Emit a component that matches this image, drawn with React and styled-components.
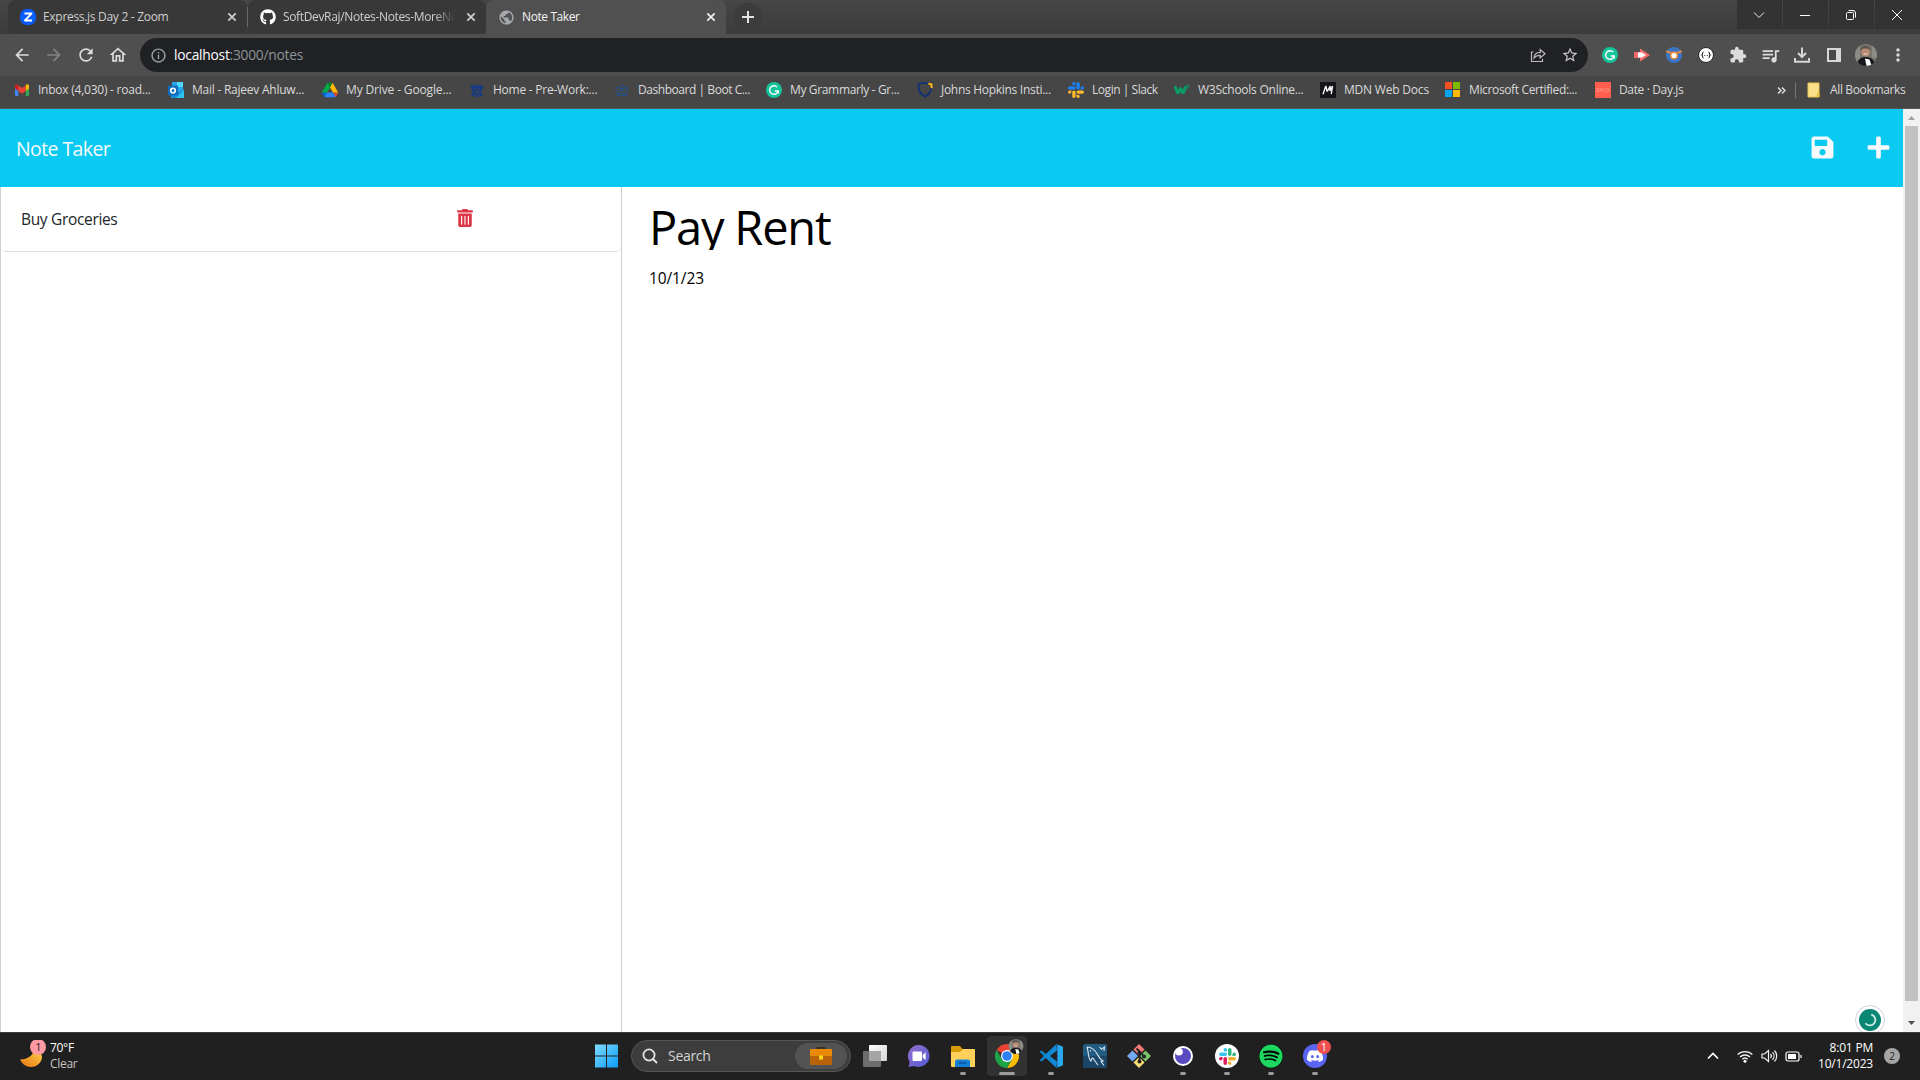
import React from "react";
import styled, { createGlobalStyle, css } from "styled-components";
import { FaGithub, FaSave, FaPlus, FaTrashAlt, FaSpotify } from "react-icons/fa";
import {
  MdArrowBack, MdArrowForward, MdRefresh, MdOutlineHome, MdInfoOutline, MdStarBorder,
  MdExtension, MdQueueMusic, MdMoreVert, MdPublic,
} from "react-icons/md";
import { SiDiscord } from "react-icons/si";

const Global = createGlobalStyle`
  *, *::before, *::after { box-sizing: border-box; }
  html, body { margin: 0; padding: 0; overflow: hidden; background: #fff; }
  body { font-family: "Open Sans", "Noto Sans", sans-serif; }
  svg { display: block; flex: none; }
`;

const Screen = styled.div`
  width: 1920px;
  height: 1080px;
  display: flex;
  flex-direction: column;
  overflow: hidden;
`;

const Text = styled.span`
  font-size: ${(p) => p.$size || 12}px;
  letter-spacing: ${(p) => p.$ls ?? -0.3}px;
  color: ${(p) => p.$color || "#dadada"};
  line-height: 16px;
  white-space: nowrap;
`;

const Cell = styled.span`
  width: ${(p) => p.$w}px;
  height: ${(p) => p.$h || 16}px;
  flex: none;
  display: flex;
  align-items: center;
  justify-content: center;
  color: ${(p) => p.$color || "#dcdcdc"};
  font-size: ${(p) => p.$size || 20}px;
`;

/* ---------- browser chrome ---------- */
const TabStrip = styled.div`
  height: 34px;
  flex: none;
  display: flex;
  padding-left: 8px;
  background: linear-gradient(#464646, #3b3b3b);
`;

const Tab = styled.div`
  width: ${(p) => p.$w}px;
  height: 34px;
  display: flex;
  align-items: center;
  padding: 0 7px 0 12px;
  background: ${(p) => (p.$active ? "#505050" : "#383838")};
  border-radius: ${(p) => (p.$active ? "8px 8px 0 0" : "8px")};
`;

const TabTitle = styled(Text)`
  flex: 1;
  margin-left: 7px;
  margin-right: 8px;
  overflow: hidden;
  color: ${(p) => (p.$active ? "#f4f4f4" : "#cfcfcf")};
  ${(p) => p.$fade && css`mask-image: linear-gradient(90deg, #000 88%, transparent);`}
`;

const TabDivider = styled.i`
  width: 1px;
  height: 20px;
  margin: 7px 0;
  background: #6a6a6a;
`;

const NewTab = styled.div`
  width: 28px;
  height: 28px;
  margin: 3px 0 0 8px;
  border-radius: 50%;
  background: #3c3c3c;
  display: grid;
  place-items: center;
`;

const WindowControls = styled.div`
  margin-left: auto;
  display: flex;
  gap: 1px;
  height: 29px;
`;

const WindowButton = styled.div`
  width: 45px;
  padding-right: 1px;
  background: #333333;
  display: grid;
  place-items: center;
`;

const Toolbar = styled.div`
  height: 42px;
  flex: none;
  display: flex;
  align-items: center;
  padding: 0 6px;
  background: #4f4f4f;
`;

const Omnibox = styled.div`
  width: 1448px;
  height: 34px;
  margin: 0 6px 0 6px;
  padding: 0 2px 0 8px;
  border-radius: 17px;
  background: #202124;
  display: flex;
  align-items: center;
`;

const Url = styled(Text)`
  flex: 1;
  margin-left: 6px;
  color: #8f9498;
  b { color: #fff; font-weight: 400; }
`;

const BookmarkBar = styled.div`
  height: 33px;
  flex: none;
  display: flex;
  align-items: flex-start;
  padding: 6px 0 0 14px;
  background: #464646;
  border-bottom: 1px solid #565656;
`;

const Bookmark = styled.div`
  width: ${(p) => p.$w}px;
  flex: none;
  display: flex;
  align-items: center;
  gap: 8px;
`;

const BookmarkDivider = styled.i`
  width: 1px;
  height: 16px;
  margin: 0 10px 0 9px;
  background: #777;
`;

/* ---------- page ---------- */
const Viewport = styled.div`
  height: 923px;
  flex: none;
  display: flex;
  position: relative;
  overflow: hidden;
`;

const Page = styled.main`
  flex: 1;
  display: flex;
  flex-direction: column;
`;

const Header = styled.header`
  height: 78px;
  flex: none;
  display: flex;
  align-items: center;
  padding: 0 12px 0 16px;
  background: #0acaf1;
`;

const Brand = styled(Text)`
  flex: 1;
  line-height: 30px;
  padding-top: 2px;
`;

const HeaderActions = styled.div`
  display: flex;
  gap: 31px;
  padding-bottom: 2px;
  color: #f8f9fa;
  font-size: 25px;
`;

const Columns = styled.div`
  flex: 1;
  display: flex;
`;

const Sidebar = styled.aside`
  width: 622px;
  border: solid #cfcfcf;
  border-width: 0 1px;
`;

const NoteItem = styled.div`
  height: 65px;
  display: flex;
  padding: 20px 147px 0 20px;
  justify-content: space-between;
  border-bottom: 1px solid #dfdfdf;
  border-radius: 0 0 5px 5px;
`;

const NoteName = styled(Text)`
  line-height: 25px;
`;

const TrashBox = styled.span`
  padding-top: 2px;
  font-size: 18px;
  color: #dc3545;
`;

const Editor = styled.section`
  padding: 9px 0 0 27px;
  display: flex;
  flex-direction: column;
`;

const NoteTitle = styled(Text)`
  height: 54px;
  line-height: 63px;
  overflow: hidden;
`;

const NoteText = styled(Text)`
  line-height: 24px;
  margin-top: 16px;
`;

const Scrollbar = styled.div`
  width: 17px;
  display: flex;
  flex-direction: column;
  align-items: center;
  background: #f1f1f1;
`;

const Thumb = styled.div`
  width: 13px;
  height: 875px;
  background: #c1c1c1;
`;

const Widget = styled.svg`
  position: absolute;
  left: 1855px;
  top: 896px;
`;

/* ---------- taskbar ---------- */
const Taskbar = styled.footer`
  height: 48px;
  flex: none;
  display: flex;
  align-items: center;
  background: #202020;
  box-shadow: inset 0 1px #3c3c3c;
`;

const Weather = styled.div`
  width: 594px;
  display: flex;
  padding-left: 20px;
  gap: 4px;
`;

const Lines = styled.div`
  display: flex;
  flex-direction: column;
  align-items: ${(p) => p.$align || "flex-start"};
  padding-bottom: 1px;
`;

const SearchBox = styled.div`
  width: 220px;
  height: 32px;
  margin: 0 2px 0 13px;
  padding: 0 3px 0 10px;
  border-radius: 16px;
  border: 1px solid #565656;
  background: #3d3d3d;
  display: flex;
  align-items: center;
  gap: 10px;
`;

const SearchHighlight = styled.span`
  width: 52px;
  height: 26px;
  margin-left: auto;
  border-radius: 13px;
  background: #535353;
  display: grid;
  place-items: center;
`;

const TaskButton = styled.div`
  width: 40px;
  height: 40px;
  margin: 0 2px;
  border-radius: 4px;
  display: flex;
  flex-direction: column;
  align-items: center;
  padding-top: 8px;
  background: ${(p) => (p.$active ? "#323232" : "transparent")};
`;

const IconSlot = styled.span`
  height: 24px;
  display: flex;
  align-items: flex-end;
`;

const Running = styled.i`
  width: ${(p) => (p.$active ? 16 : 6)}px;
  height: 3px;
  margin-top: 4px;
  border-radius: 2px;
  background: #9c9c9c;
`;

const Tray = styled.div`
  margin-left: auto;
  padding-right: 20px;
  display: flex;
  align-items: center;
`;

const Clock = styled(Lines)`
  width: 64px;
`;

const Count = styled.span`
  width: 16px;
  height: 16px;
  margin-left: 11px;
  border-radius: 50%;
  background: #a5a5a5;
  color: #202020;
  font-size: 10px;
  line-height: 16px;
  text-align: center;
`;

/* ---------- drawings ---------- */
const Svg = ({ s = 16, w, h, vb, children, ...rest }) => (
  <svg width={w || s} height={h || s} viewBox={vb || `0 0 ${w || s} ${h || s}`} fill="none" {...rest}>
    {children}
  </svg>
);

const Close = ({ color = "#d0d0d0" }) => (
  <Svg s={16} stroke={color} strokeWidth="1.7"><path d="M4.3 4.3l7.4 7.4M11.7 4.3l-7.4 7.4" /></Svg>
);

const ZoomLogo = () => (
  <Svg>
    <rect width="16" height="16" rx="7" fill="#0b5cff" />
    <path d="M4.5 4.6h7L5 11.4h7" stroke="#fff" strokeWidth="2" strokeLinejoin="round" />
  </Svg>
);

const Gmail = () => (
  <Svg>
    <path d="M1 3.500V13a1 1 0 0 0 1 1h2.300V7z" fill="#4285f4" />
    <path d="M15 3.500V13a1 1 0 0 1-1 1h-2.300V7z" fill="#34a853" />
    <path d="M11.700 4v5L15 6.500V4c0-1.600-1.700-2.200-3-1.200z" fill="#fbbc04" />
    <path d="M4.300 4v5L1 6.500V4c0-1.600 1.700-2.200 3-1.200z" fill="#c5221f" />
    <path d="M4.300 9V3.200L8 6l3.700-2.800V9L8 11.800z" fill="#ea4335" />
  </Svg>
);

const Outlook = () => (
  <Svg>
    <path d="M4 0h11v10H4z" fill="#28a8ea" /><path d="M9 0h6v5H9z" fill="#50d9ff" />
    <path d="M3 8l7 3 6-4v9H3z" fill="#1490df" /><path d="M8 16l8-8v8z" fill="#2fc0f0" />
    <rect x="0" y="3.500" width="10" height="10" rx="1" fill="#0f6cbd" />
    <circle cx="5" cy="8.500" r="2.300" stroke="#fff" strokeWidth="1.600" />
  </Svg>
);

const Drive = () => (
  <Svg vb="0 0 87.3 78">
    <path d="m6.6 66.850 3.850 6.650c.8 1.400 1.950 2.500 3.300 3.300l13.750-23.800h-27.500c0 1.550.4 3.100 1.200 4.500z" fill="#0066da" />
    <path d="m43.650 25-13.750-23.800c-1.350.8-2.500 1.900-3.300 3.300l-25.400 44a9.060 9.060 0 0 0-1.200 4.500h27.500z" fill="#00ac47" />
    <path d="m73.550 76.800c1.350-.8 2.500-1.900 3.300-3.300l1.600-2.750 7.650-13.250c.8-1.400 1.200-2.950 1.200-4.500h-27.500l5.850 11.500z" fill="#ea4335" />
    <path d="m43.650 25 13.750-23.800c-1.350-.8-2.900-1.200-4.500-1.200h-18.500c-1.600 0-3.150.45-4.500 1.200z" fill="#00832d" />
    <path d="m59.800 53h-32.300l-13.750 23.800c1.350.8 2.900 1.200 4.500 1.200h50.800c1.600 0 3.150-.45 4.500-1.200z" fill="#2684fc" />
    <path d="m73.400 26.500-12.700-22c-.8-1.400-1.950-2.500-3.300-3.300l-13.750 23.800 16.150 28h27.450c0-1.550-.4-3.100-1.200-4.500z" fill="#ffba00" />
  </Svg>
);

const Crest = () => (
  <Svg fill="#173a86">
    <path d="M2 3l2 1 1.500-2L7 4.500 8 3l1 1.500L10.500 2 12 4l2-1v4l-2 1.500.5 3L14 13l-2.500 1L9.800 12.500 9.500 15h-3l-.3-2.500L4.500 14 2 13l1.500-1.500.5-3L2 7z" />
    <path d="M4.500 5.500L7 8M11.500 5.500L9 8M6 11h4M5 9.500l2 .5M11 9.500L9 10M8 6v7" stroke="#3f4450" strokeWidth="1" />
  </Svg>
);

const Crown = () => (
  <Svg stroke="#24508c" strokeWidth="1.100">
    <path d="M3 9C0 5.500 3.500 3.500 5.500 6.500L8 9l2.500-2.500C12.500 3.500 16 5.500 13 9l-.6 4.500H3.600zM8 2v7M6.500 3.500h3M3.500 11.500h9" />
  </Svg>
);

const GrammarlyG = () => (
  <Svg>
    <circle cx="8" cy="8" r="8" fill="#15c39a" />
    <path d="M11.200 5.100A4.300 4.300 0 1 0 12.200 9H8.700M12.200 8.500v3" stroke="#fff" strokeWidth="1.400" />
  </Svg>
);

const Shield = () => (
  <Svg>
    <path d="M10.500 1.300C7 .5 4 1 1.500 2.400c-.5 5 1.500 9.600 6.500 12.100 4-2 5.700-5 6.200-8" stroke="#0b2f7c" strokeWidth="1.700" />
    <path d="M11.500.8l4 1v4.500l-2-.6.300-2.300-2.300-.6z" fill="#fdbb1c" />
  </Svg>
);

const SlackMark = ({ s = 16, colors }) => (
  <Svg s={s} vb="0 0 24 24">
    <path fill={colors[0]} d="M8.834 5.042a2.528 2.528 0 0 1-2.521-2.520A2.528 2.528 0 0 1 8.834 0a2.528 2.528 0 0 1 2.521 2.522v2.520H8.834zM8.834 6.313a2.528 2.528 0 0 1 2.521 2.521 2.528 2.528 0 0 1-2.521 2.521H2.522A2.528 2.528 0 0 1 0 8.834a2.528 2.528 0 0 1 2.522-2.521h6.312z" />
    <path fill={colors[1]} d="M18.956 8.834a2.528 2.528 0 0 1 2.522-2.521A2.528 2.528 0 0 1 24 8.834a2.528 2.528 0 0 1-2.522 2.521h-2.522V8.834zM17.688 8.834a2.528 2.528 0 0 1-2.523 2.521 2.527 2.527 0 0 1-2.520-2.521V2.522A2.527 2.527 0 0 1 15.165 0a2.528 2.528 0 0 1 2.523 2.522v6.312z" />
    <path fill={colors[2]} d="M15.165 18.956a2.528 2.528 0 0 1 2.523 2.522A2.528 2.528 0 0 1 15.165 24a2.527 2.527 0 0 1-2.520-2.522v-2.522h2.520zM15.165 17.688a2.527 2.527 0 0 1-2.520-2.523 2.526 2.526 0 0 1 2.520-2.520h6.313A2.527 2.527 0 0 1 24 15.165a2.528 2.528 0 0 1-2.522 2.523h-6.313z" />
    <path fill={colors[3]} d="M5.042 15.165a2.528 2.528 0 0 1-2.520 2.523A2.528 2.528 0 0 1 0 15.165a2.527 2.527 0 0 1 2.522-2.520h2.520v2.520zM6.313 15.165a2.527 2.527 0 0 1 2.521-2.520 2.527 2.527 0 0 1 2.521 2.520v6.313A2.528 2.528 0 0 1 8.834 24a2.528 2.528 0 0 1-2.521-2.522v-6.313z" />
  </Svg>
);

const W3 = () => (
  <Svg stroke="#0a9b62">
    <path d="M.8 4l3 7.500L6.500 6l2.500 5.500L12 4" strokeWidth="3" strokeLinejoin="bevel" />
    <path d="M12.800 2.800h2l-1 1.400c1.800 0 1.600 2.300-.8 1.800" strokeWidth=".9" />
  </Svg>
);

const Mdn = () => (
  <Svg>
    <rect width="16" height="16" fill="#15141a" />
    <path d="M3 12.200L5.800 4l1.400 5.500L10.200 4l-.3 5 2.600-5L11.300 12.200" stroke="#fff" strokeWidth="1.300" strokeLinejoin="bevel" />
  </Svg>
);

const Microsoft = () => (
  <Svg>
    <path fill="#f25022" d="M0 0h7v7H0z" /><path fill="#7fba00" d="M8 0h7v7H8z" />
    <path fill="#00a4ef" d="M0 8h7v7H0z" /><path fill="#ffb900" d="M8 8h7v7H8z" />
  </Svg>
);

const DayBox = styled.span`
  width: 16px;
  height: 16px;
  flex: none;
  background: #ff5f4c;
  color: #ffaea4;
  font-size: 4.500px;
  line-height: 16px;
  text-align: center;
`;

const Folder = () => (
  <Svg>
    <path d="M2 1h11v14H2z" fill="#fbe08a" stroke="#e9c553" /><path d="M11 11h2.500v4H11z" fill="#e9c040" />
  </Svg>
);

const Share = () => (
  <Svg s={16} stroke="#bdbdbd" strokeWidth="1.200">
    <path d="M3.500 5h-2v9.500h11V12M4 11c.4-4 2.800-5.600 6.200-5.600V2.500L15 6.700 10.200 11V8.300C7.500 8.300 5.500 9 4 11z" />
  </Svg>
);

const RedArrow = () => (
  <Svg><path d="M0 5h6V1.500L16 8 6 14.500V11H0z" fill="#f8696b" /><path d="M4 5.500h4l4 2.500-4 2.500H4z" fill="#fff" /></Svg>
);
const BlueEye = () => (
  <Svg>
    <circle cx="8" cy="8" r="8" fill="#3a76c4" />
    <path d="M.5 4c2 1.800 4 2 7.500 2s5.500-.2 7.500-2" stroke="#f28a3a" strokeWidth="1.700" />
    <circle cx="8" cy="8.500" r="4" fill="#f28a3a" /><circle cx="8" cy="8.500" r="2.600" fill="#fff" />
  </Svg>
);
const Braces = () => (
  <Svg>
    <circle cx="8" cy="8" r="7.500" fill="#fff" stroke="#222" />
    <path d="M5.500 5c-1.300 0-.5 2.600-1.600 3 1.100.4.3 3 1.600 3M10.500 5c1.300 0 .5 2.600 1.600 3-1.100.4-.3 3-1.600 3M6.300 8.500h.9M8.800 8.500h.9" stroke="#222" strokeWidth="1.100" />
  </Svg>
);
const Download = () => (
  <Svg stroke="#d6d6d6" strokeWidth="2">
    <path d="M1 11v3.800h14V11M8 .5v9M4 6l4 4 4-4" />
  </Svg>
);
const SidePanel = () => (
  <Svg><path d="M1 1h14v14H1z" fill="#d6d6d6" /><path d="M3 3h7v10H3z" fill="#484848" /></Svg>
);

const Face = ({ s }) => (
  <svg width={s} height={s} viewBox="0 0 22 22">
    <clipPath id={`face${s}`}><circle cx="11" cy="11" r="11" /></clipPath>
    <g clipPath={`url(#face${s})`}>
      <path d="M0 0h22v22H0z" fill="#77746c" />
      <path d="M0 0h5v22H0zM17 0h5v14h-5z" fill="#8b8c86" />
      <path d="M2 22c0-7 4-9 9-9s9 3 9 9z" fill="#17181c" />
      <circle cx="10.500" cy="8" r="4.500" fill="#b98a75" />
      <path d="M5.700 7C5.500 2.800 8 2 10.500 2S15.500 3 15.300 7c-1-2-2-2.400-4.800-2.400S6.500 5 5.700 7z" fill="#5a534d" />
      <path d="M8.500 10h4" stroke="#f0e6e0" strokeWidth=".9" />
      <path d="M10 14.500l4.500 1 2 6-5 .5z" fill="#fff" />
    </g>
  </svg>
);

const Moon = () => (
  <Svg w={26} h={30}>
    <defs><linearGradient id="moon" x1="1" y1="0" x2="0" y2="1"><stop stopColor="#fbd04a" /><stop offset="1" stopColor="#e9740e" /></linearGradient></defs>
    <path d="M0 19.500c6 0 12.500-3 14-9 3 0 8 3 8 6 0 6-5 10.500-11 10.500-5 0-9-3-11-7.500z" fill="url(#moon)" />
    <circle cx="18" cy="7" r="8" fill="#ff99a4" />
    <text x="18.400" y="11" fontSize="11" fill="#222" textAnchor="middle">1</text>
  </Svg>
);

const StartLogo = () => (
  <Svg s={24}>
    <defs><linearGradient id="win" x1="0" y1="0" x2="1" y2="1" ><stop stopColor="#7fdcff" /><stop offset="1" stopColor="#0a9bf5" /></linearGradient></defs>
    <path d="M1 .5h11v11H1zM13 .5h11v11H13zM1 12.500h11v11H1zM13 12.500h11v11H13z" fill="url(#win)" />
  </Svg>
);

const Magnifier = () => (
  <Svg s={16} stroke="#e4e4e4" strokeWidth="1.800"><circle cx="7" cy="7" r="5.600" /><path d="M11 11l4 4" /></Svg>
);

const Briefcase = () => (
  <Svg w={22} h={20}>
    <path d="M7.500 4V1.800h7V4" stroke="#3a2c20" strokeWidth="1.800" />
    <rect y="3" width="22" height="16" rx="1" fill="#b8620a" /><path d="M0 4a1 1 0 0 1 1-1h20a1 1 0 0 1 1 1v6H0z" fill="#e88a08" />
    <rect x="9" y="9.500" width="4" height="4" fill="#ffd31a" />
  </Svg>
);

const TaskView = () => (
  <Svg s={24}>
    <defs><linearGradient id="tv" x1="0" y1="0" x2="1" y2="1"><stop stopColor="#fff" /><stop offset="1" stopColor="#d4d4d4" /></linearGradient></defs>
    <rect x="6" y="1" width="18" height="16" rx="1" fill="url(#tv)" />
    <rect x="0" y="7" width="18" height="16" rx="1" fill="#6d6d6d" /><path d="M6 7h12v10H6z" fill="#a5a5a5" />
  </Svg>
);

const Chat = () => (
  <Svg s={24}>
    <defs><linearGradient id="chat" x1="0" y1="0" x2="1" y2="1"><stop stopColor="#9a6fcd" /><stop offset="1" stopColor="#4f5bd5" /></linearGradient></defs>
    <path d="M12 1a11 11 0 1 1-5 21l-5.500 1 1.200-5A11 11 0 0 1 12 1z" fill="url(#chat)" />
    <rect x="5.500" y="7.500" width="9.500" height="9.500" rx="1" fill="#fff" /><path d="M15.700 11l3-2.800v8l-3-2.800z" fill="#fff" />
  </Svg>
);

const Explorer = () => (
  <Svg s={24}>
    <path d="M0 3a1 1 0 0 1 1-1h8l2.500 3H23a1 1 0 0 1 1 1v4H0z" fill="#d99a08" />
    <path d="M0 8h9l3-3h11a1 1 0 0 1 1 1v17H1a1 1 0 0 1-1-1z" fill="#ffd15a" />
    <path d="M4 23v-5.500a2 2 0 0 1 2-2h11a2 2 0 0 1 2 2V23z" fill="#1380d8" /><path d="M7.500 19h8" stroke="#0a5ca8" strokeWidth="2" />
  </Svg>
);

const ChromeLogo = () => (
  <svg width="36" height="29" viewBox="-6 -5 36 29" fill="none">
    <path d="M12 12L1.600 6A12 12 0 0 1 22.400 6H12z" fill="#ea4335" />
    <path d="M12 6h10.400A12 12 0 0 1 12 24l5.200-9z" fill="#fbbc04" />
    <path d="M1.600 6A12 12 0 0 0 12 24l5.200-9-10.400 0z" fill="#1ea446" />
    <circle cx="12" cy="12" r="6" fill="#fff" /><circle cx="12" cy="12" r="4.800" fill="#2d7ff2" />
    <g transform="translate(13.500 -5)"><Face s={15} /></g>
  </svg>
);

const VsCode = () => (
  <Svg s={24}>
    <path d="M17.500 0L6.800 10 2.300 6.600.500 7.600 5 12 .500 16.400l1.800 1L6.800 14 17.500 24l.500-6.500L11 12l7-5.500z" fill="#1089d4" />
    <path d="M17.500 0L24 2.800v18.400L17.500 24c.6 0 .8-.4.800-1V1c0-.6-.2-1-.8-1z" fill="#2aa8f2" />
  </Svg>
);

const MySql = () => (
  <Svg s={24}>
    <rect width="24" height="24" rx="2" fill="#235a80" /><path d="M0 12h24v10a2 2 0 0 1-2 2H2a2 2 0 0 1-2-2z" fill="#1c4668" />
    <path d="M4 3c5 0 8 3 10.500 7.500 1.500 3 2.500 5 5.500 6.500l-2 .5 3 4M4 3c1 3 1 5 1.500 8 .3 2 1 5 2.500 6 .3-2 .7-3 1.700-3 2 2 3.300 5 5.300 7M7 6.500l1 .8M16.500 3l2 2.200 3-2.200-.5 4" stroke="#d8e6f0" strokeWidth="1.100" />
  </Svg>
);

const GitLogo = () => (
  <Svg s={24}>
    <path d="M12 0l5.500 5.500L12 11 6.500 5.500z" fill="#f37b74" /><path d="M5.500 6.500L11 12l-5.500 5.500L0 12z" fill="#74a8f2" />
    <path d="M18.500 6.500L24 12l-5.500 5.500L13 12z" fill="#7cc46a" /><path d="M12 13l5.500 5.500L12 24l-5.500-5.500z" fill="#f6dc74" />
    <path d="M12.500 7v11M9.500 4.500l3 3M13 8l4 4.500" stroke="#222" strokeWidth="1.800" />
    <circle cx="12.500" cy="8.500" r="2" fill="#222" /><circle cx="12.500" cy="17.500" r="2" fill="#222" /><circle cx="17" cy="12.500" r="2" fill="#222" />
  </Svg>
);

const Insomnia = () => (
  <Svg s={24}>
    <circle cx="12" cy="12" r="10" fill="#fff" /><circle cx="12" cy="12" r="8" fill="#5a4bc0" /><circle cx="8" cy="7.800" r="3.800" fill="#fff" />
  </Svg>
);

const Disc = styled.span`
  position: relative;
  width: 24px;
  height: 24px;
  border-radius: 50%;
  background: ${(p) => p.$bg};
  color: ${(p) => p.$color || "#fff"};
  font-size: ${(p) => p.$size || 16}px;
  display: grid;
  place-items: center;
`;

const Alert = styled.span`
  position: absolute;
  left: 14px;
  top: -4px;
  width: 14px;
  height: 14px;
  border-radius: 50%;
  background: #f04f4f;
  font-size: 11px;
  line-height: 14px;
  text-align: center;
`;

const BOOKMARKS = [
  [154, <Gmail />, "Inbox (4,030) - road...", -0.24],
  [154, <Outlook />, "Mail - Rajeev Ahluw...", -0.24],
  [147, <Drive />, "My Drive - Google...", -0.14],
  [145, <Crest />, "Home - Pre-Work:...", -0.24],
  [152, <Crown />, "Dashboard | Boot C...", -0.45],
  [151, <GrammarlyG />, "My Grammarly - Gr...", -0.35],
  [151, <Shield />, "Johns Hopkins Insti...", -0.29],
  [106, <SlackMark colors={["#1b82f5", "#1b82f5", "#fcb72b", "#fcb72b"]} />, "Login | Slack", -0.45],
  [146, <W3 />, "W3Schools Online...", -0.25],
  [125, <Mdn />, "MDN Web Docs", -0.2],
  [150, <Microsoft />, "Microsoft Certified:...", -0.36],
  [182, <DayBox>DAY.JS</DayBox>, "Date · Day.js", -0.36],
];

const EXTENSIONS = [
  <GrammarlyG />, <RedArrow />, <BlueEye />, <Braces />, <MdExtension size={18} />,
  <MdQueueMusic size={21} />, <Download />, <SidePanel />, <Face s={22} />, <MdMoreVert size={20} />,
];

const TASKS = [
  { icon: <TaskView /> },
  { icon: <Chat /> },
  { icon: <Explorer />, running: true },
  { icon: <ChromeLogo />, running: true, active: true },
  { icon: <VsCode />, running: true },
  { icon: <MySql /> },
  { icon: <GitLogo /> },
  { icon: <Insomnia />, running: true },
  { icon: <Disc $bg="#fff"><SlackMark s={17} colors={["#36c5f0", "#2eb67d", "#ecb22e", "#e01e5a"]} /></Disc>, running: true },
  { icon: <Disc $bg="#000" $color="#1ed760" $size={24}><FaSpotify /></Disc>, running: true },
  { icon: <Disc $bg="#5865f2"><SiDiscord /><Alert>1</Alert></Disc>, running: true },
];

export default function App() {
  return (
    <Screen>
      <Global />
      <TabStrip>
        <Tab $w={239}>
          <ZoomLogo /><TabTitle>Express.js Day 2 - Zoom</TabTitle><Close />
        </Tab>
        <TabDivider />
        <Tab $w={238}>
          <FaGithub size={16} color="#fff" /><TabTitle $fade $ls={-0.35}>SoftDevRaj/Notes-Notes-MoreNotes</TabTitle><Close />
        </Tab>
        <Tab $w={240} $active>
          <MdPublic size={17} color="#a4a8ad" /><TabTitle $active $ls={-0.4}>Note Taker</TabTitle><Close color="#f0f0f0" />
        </Tab>
        <NewTab><Svg s={12} stroke="#e4e4e4" strokeWidth="2"><path d="M6 0v12M0 6h12" /></Svg></NewTab>
        <WindowControls>
          <WindowButton><Svg s={12} stroke="#eee"><path d="M1 3.500l5 5 5-5" /></Svg></WindowButton>
          <WindowButton><Svg s={10} stroke="#fff"><path d="M0 5.500h10" /></Svg></WindowButton>
          <WindowButton><Svg s={10} stroke="#fff"><rect x=".5" y="2.500" width="7" height="7" rx="1" /><path d="M2.500.500H7A2.500 2.500 0 0 1 9.500 3v4.500" /></Svg></WindowButton>
          <WindowButton><Svg s={10} stroke="#fff"><path d="M0 0l10 10M10 0L0 10" /></Svg></WindowButton>
        </WindowControls>
      </TabStrip>

      <Toolbar>
        <Cell $w={32}><MdArrowBack /></Cell>
        <Cell $w={32} $color="#848484"><MdArrowForward /></Cell>
        <Cell $w={32}><MdRefresh /></Cell>
        <Cell $w={32}><MdOutlineHome /></Cell>
        <Omnibox>
          <Cell $w={20} $color="#a0a4a8" $size={17}><MdInfoOutline /></Cell>
          <Url $size={13.8} $ls={-0.25}><b>localhost</b>:3000/notes</Url>
          <Cell $w={32}><Share /></Cell>
          <Cell $w={32} $size={18} $color="#c8c8c8"><MdStarBorder /></Cell>
        </Omnibox>
        {EXTENSIONS.map((icon, i) => <Cell key={i} $w={32} $h={22}>{icon}</Cell>)}
      </Toolbar>

      <BookmarkBar>
        {BOOKMARKS.map(([w, icon, name, ls]) => (
          <Bookmark key={name} $w={w}>{icon}<Text $ls={ls}>{name}</Text></Bookmark>
        ))}
        <Cell $w={9}><Svg s={9} stroke="#dcdcdc" strokeWidth="1.500"><path d="M1 1.500l3 3-3 3M5 1.500l3 3-3 3" /></Svg></Cell>
        <BookmarkDivider />
        <Bookmark $w={110}><Folder /><Text $ls={-0.36}>All Bookmarks</Text></Bookmark>
      </BookmarkBar>

      <Viewport>
        <Page>
          <Header>
            <Brand $size={19.5} $ls={-0.6} $color="#f8f9fa">Note Taker</Brand>
            <HeaderActions><FaSave /><FaPlus /></HeaderActions>
          </Header>
          <Columns>
            <Sidebar>
              <NoteItem>
                <NoteName $size={15.5} $ls={-0.33} $color="#212529">Buy Groceries</NoteName>
                <TrashBox><FaTrashAlt /></TrashBox>
              </NoteItem>
            </Sidebar>
            <Editor>
              <NoteTitle $size={47} $ls={-1.2} $color="#000">Pay Rent</NoteTitle>
              <NoteText $size={15.5} $ls={-0.1} $color="#000">10/1/23</NoteText>
            </Editor>
          </Columns>
        </Page>
        <Scrollbar>
          <Svg w={17} h={17}><path d="M5 11l3.500-4 3.500 4z" fill="#a0a0a0" /></Svg>
          <Thumb />
          <Svg w={17} h={31}><path d="M5 20l3.500 4 3.500-4z" fill="#505050" /></Svg>
        </Scrollbar>
        <Widget width="30" height="30" viewBox="0 0 30 30" fill="none">
          <circle cx="15" cy="15" r="14.500" fill="#fff" stroke="#cfd1e0" />
          <circle cx="15" cy="15" r="11" fill="#0a8674" />
          <path d="M17 9.800a5.500 5.500 0 1 1-6 9" stroke="#cdeee6" strokeWidth="1.800" strokeLinecap="round" />
        </Widget>
      </Viewport>

      <Taskbar>
        <Weather>
          <Moon />
          <Lines><Text $color="#fff">70°F</Text><Text $color="#c4c4c4">Clear</Text></Lines>
        </Weather>
        <StartLogo />
        <SearchBox>
          <Magnifier />
          <Text $size={14} $ls={-0.3} $color="#d4d4d4">Search</Text>
          <SearchHighlight><Briefcase /></SearchHighlight>
        </SearchBox>
        {TASKS.map((t, i) => (
          <TaskButton key={i} $active={t.active}>
            <IconSlot>{t.icon}</IconSlot>
            {t.running && <Running $active={t.active} />}
          </TaskButton>
        ))}
        <Tray>
          <Cell $w={32}><Svg w={12} h={8} stroke="#fff" strokeWidth="1.700"><path d="M1 6.500l5-5 5 5" /></Svg></Cell>
          <Cell $w={32}>
            <Svg w={16} h={13} stroke="#f0f0f0" strokeWidth="1.300">
              <path d="M.6 4.600a10.500 10.500 0 0 1 14.800 0M3 7a7.200 7.200 0 0 1 10 0M5.300 9.300a3.900 3.900 0 0 1 5.400 0" /><circle cx="8" cy="11.300" r="1.500" fill="#fff" stroke="none" />
            </Svg>
          </Cell>
          <Cell $w={16}>
            <Svg w={17} h={14} stroke="#f0f0f0" strokeWidth="1.200">
              <path d="M1 5h2.500L7.500 1.500v11L3.500 9H1zM9.500 5a3 3 0 0 1 0 4M11.500 3.200a5.600 5.600 0 0 1 0 7.600M13.500 1.500a8 8 0 0 1 0 11" />
            </Svg>
          </Cell>
          <Cell $w={32}>
            <Svg w={17} h={11} stroke="#fff" strokeWidth="1.200">
              <rect x="1" y="1" width="13" height="9" rx="2" /><rect x="3" y="3" width="8" height="5" fill="#fff" stroke="none" /><path d="M16 4v3" />
            </Svg>
          </Cell>
          <Clock $align="flex-end"><Text $color="#fff" $ls={-0.2}>8:01 PM</Text><Text $color="#fff" $ls={-0.2}>10/1/2023</Text></Clock>
          <Count>2</Count>
        </Tray>
      </Taskbar>
    </Screen>
  );
}
